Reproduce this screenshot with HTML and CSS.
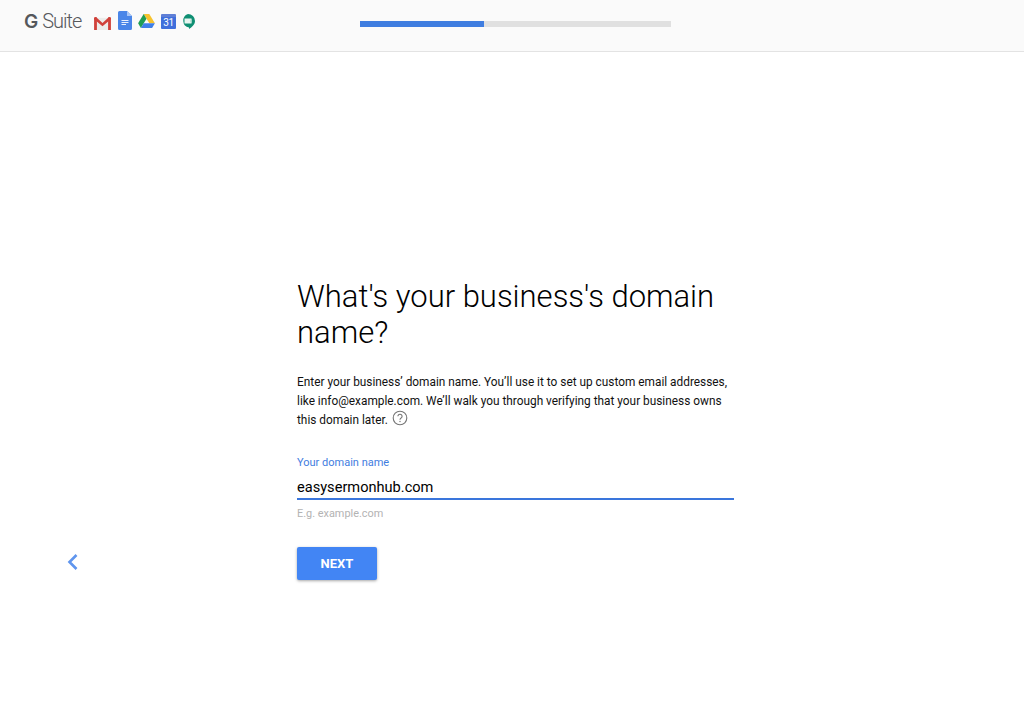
FILE: index.html
```html
<!DOCTYPE html>
<html lang="en">
<head>
<meta charset="utf-8">
<title>G Suite</title>
<link rel="stylesheet" href="styles.css">
</head>
<body>
<header class="topbar">
  <div class="brand">
    <span class="logo"><b class="logo-g">G</b><span class="logo-word">Suite</span></span>
    <div class="apps">
      <svg class="app gmail" viewBox="0 0 20 15"><path d="M1 2h18v13H1z" fill="#ececea"/><path d="M1 15V2l2-1 1 1v13zM16 15V2l1-1 2 1v13z" fill="#d0413a"/><path d="M1 2l2-1 7 6.500L17 1l2 1v1.500L10 11 1 3.500z" fill="#d0413a"/></svg>
      <svg class="app docs" viewBox="0 0 14 19"><path d="M1.500 0H9l5 5v12.500a1.500 1.500 0 0 1-1.500 1.500h-11A1.500 1.500 0 0 1 0 17.500v-16A1.500 1.500 0 0 1 1.500 0z" fill="#4a86e8"/><path d="M9 0l5 5H9z" fill="#a9c6f5"/><path d="M3.500 9h7v1h-7zM3.500 11h7v1h-7zM3.500 13h4.500v1H3.500z" fill="#e8f0fe"/></svg>
      <svg class="app drive" viewBox="0 0 18 15"><path d="M6 0h6l6 10h-6z" fill="#f7c32e"/><path d="M6 0l3 5-6 10-3-5z" fill="#1f9d55"/><path d="M6 10h12l-3 5H3z" fill="#3f7fe8"/></svg>
      <div class="app cal"><span class="cal-num">31</span></div>
      <svg class="app chat" viewBox="0 0 14 16"><path d="M7 0a7 7 0 0 1 7 7c0 3.500-3 6-6 8v-1.500A7 7 0 0 1 7 0z" fill="#0f8f73"/><path d="M3.500 4.500h7v5h-7z" fill="#e8f5f0"/><path d="M9 6l1.500-1v4L9 8z" fill="#bfe3d8"/></svg>
    </div>
  </div>
  <div class="progress"><div class="progress-fill"></div></div>
</header>
<main class="page">
  <section class="intro">
    <h1 class="title">What's your business's domain name?</h1>
    <p class="lead">Enter your business’ domain name. You’ll use it to set up custom email addresses, like info@example.com. We’ll walk you through verifying that your business owns this domain later.
      <svg class="help" viewBox="0 0 16 16"><circle cx="8" cy="8" r="6.800" fill="none" stroke="#757575" stroke-width="1.100"/><path d="M5.900 6.300a2.100 2.100 0 1 1 3.200 1.800c-.7.400-1.100.8-1.100 1.600" fill="none" stroke="#757575" stroke-width="1.100"/><circle cx="8" cy="11.500" r=".7" fill="#757575"/></svg>
    </p>
    <label class="field-label" for="domain">Your domain name</label>
    <input class="field-input" id="domain" type="text" value="easysermonhub.com">
    <p class="hint">E.g. example.com</p>
  </section>
  <a class="back" href="#" aria-label="Back"><svg viewBox="0 0 12 18"><path d="M10 2 3 9l7 7" fill="none" stroke="#5f95ee" stroke-width="2.600"/></svg></a>
  <button class="next" type="button">NEXT</button>
</main>
</body>
</html>
```
FILE: styles.css
```css
* { box-sizing: border-box; }
html, body { margin: 0; height: 100%; }
body { background: #fff; font-family: Roboto, "Liberation Sans", sans-serif; color: #111; overflow: hidden; }

.topbar { height: 52px; background: #fafafa; border-bottom: 1px solid #e3e3e3; display: flex; align-items: flex-start; }
.brand { width: 360px; padding: 11px 0 0 24px; display: flex; align-items: flex-start; flex: none; }
.logo { display: flex; align-items: baseline; gap: 4px; font-size: 20px; line-height: 21px; color: #55585c; font-weight: 300; letter-spacing: -1px; white-space: nowrap; width: 69px; }
.logo-g { font-family: Inter, Roboto, sans-serif; font-weight: 600; color: #55585c; font-size: 19px; letter-spacing: 0; }
.logo-word { font-weight: 300; }
.apps { display: flex; align-items: flex-start; }
.app { display: block; flex: none; }
.gmail { width: 19px; height: 14px; margin-top: 5px; }
.docs { width: 14px; height: 19px; margin: 0 0 0 6px; }
.drive { width: 17px; height: 14px; margin: 3px 0 0 6px; }
.cal { width: 15px; height: 15px; margin: 3px 0 0 6px; background: #3f6fdc; border-top: 3px solid #5f7fd6; border-radius: 1px; text-align: center; }
.cal-num { display: block; color: #fff; font-size: 10px; line-height: 12px; font-weight: 400; letter-spacing: -.3px; }
.chat { width: 14px; height: 16px; margin: 3px 0 0 5px; }

.progress { width: 311px; height: 6px; margin-top: 21px; background: #e0e0e0; }
.progress-fill { width: 124px; height: 100%; background: #3f7de0; }

.page { display: grid; grid-template-columns: 297px 437px; grid-template-rows: auto auto; padding-top: 227px; }
.intro { grid-column: 2; grid-row: 1; }
.title { margin: 0; font-size: 31px; line-height: 36px; font-weight: 300; color: #000; width: 437px; }
.lead { margin: 22px 0 0; font-size: 11.85px; line-height: 18.6px; color: #111; }
.help { width: 16px; height: 16px; vertical-align: -2px; margin-left: 1px; }
.field-label { display: block; margin-top: 26px; font-size: 11px; line-height: 14px; color: #3f7de0; }
.field-input { display: block; width: 437px; height: 23px; margin-top: 7px; padding: 0; border: 0; border-bottom: 2px solid #3a76dc; outline: 0; background: none; font: 400 14.6px Roboto, "Liberation Sans", sans-serif; color: #000; }
.hint { margin: 7px 0 0; font-size: 10.9px; line-height: 14px; color: #b3b3b3; }

.back { grid-column: 1; grid-row: 2; align-self: center; justify-self: start; margin: 24px 0 0 66px; display: block; width: 13px; height: 18px; }
.back svg { display: block; width: 13px; height: 18px; }
.next { grid-column: 2; grid-row: 2; justify-self: start; width: 80px; height: 33px; margin-top: 26px; border: 0; border-radius: 2px; background: #4285f4; color: #fff; font: 700 13px Roboto, "Liberation Sans", sans-serif; box-shadow: 0 1px 3px rgba(0,0,0,.35); }
```
